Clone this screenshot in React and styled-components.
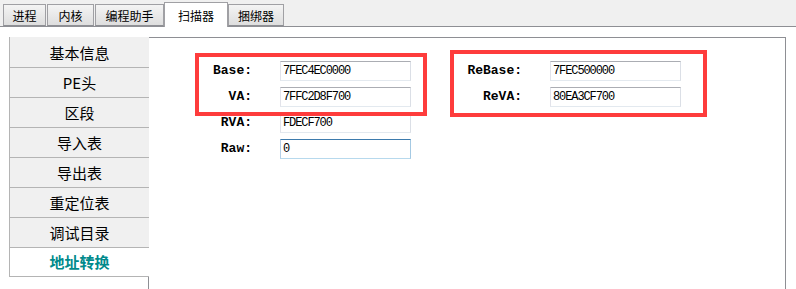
import styled, { createGlobalStyle } from 'styled-components'

const GlobalStyle = createGlobalStyle`
  html, body {
    margin: 0;
    padding: 0;
    background: #ffffff;
    font-family: "Noto Sans CJK SC", "Noto Sans", sans-serif;
    overflow: hidden;
  }
`

const tabs = [
  { label: '进程', width: 43 },
  { label: '内核', width: 47 },
  { label: '编程助手', width: 69 },
  { label: '扫描器', width: 64, active: true },
  { label: '捆绑器', width: 56 },
]

const menu = ['基本信息', 'PE头', '区段', '导入表', '导出表', '重定位表', '调试目录', '地址转换']

const leftRows = [
  { label: 'Base:', value: '7FEC4EC0000' },
  { label: 'VA:', value: '7FFC2D8F700' },
  { label: 'RVA:', value: 'FDECF700' },
  { label: 'Raw:', value: '0', focused: true },
]

const rightRows = [
  { label: 'ReBase:', value: '7FEC500000' },
  { label: 'ReVA:', value: '80EA3CF700' },
]

const App = () => {
  return (
    <>
      <GlobalStyle />
      <Page>
        <TabBar>
          {tabs.map(t => (
            <Tab key={t.label} $w={t.width} $active={t.active}>{t.label}</Tab>
          ))}
        </TabBar>
        <Body>
          <Sidebar>
            {menu.map((m, i) => (
              <MenuItem key={m} $active={i === menu.length - 1}>{m}</MenuItem>
            ))}
          </Sidebar>
          <Panel>
            <Group $labelWidth={52}>
              {leftRows.map(r => (
                <Row key={r.label}>
                  <Label>{r.label}</Label>
                  <Field readOnly value={r.value} $focused={r.focused} />
                </Row>
              ))}
            </Group>
            <Group $labelWidth={70}>
              {rightRows.map(r => (
                <Row key={r.label}>
                  <Label>{r.label}</Label>
                  <Field readOnly value={r.value} />
                </Row>
              ))}
            </Group>
            {/* red annotation frames drawn over the form */}
            <Mark $left={46} $top={15} $w={232} $h={63} />
            <Mark $left={301} $top={12} $w={257} $h={67} />
          </Panel>
        </Body>
      </Page>
    </>
  )
}

export default App

const Page = styled.div`
  width: 796px;
  height: 289px;
  overflow: hidden;
  background: #ffffff;
`

const TabBar = styled.div`
  display: flex;
  align-items: flex-end;
  gap: 1px;
  height: 26px;
  padding-left: 3px;
  background: #f0f0f0;
  border-bottom: 1px solid #8e8f94;
`

const Tab = styled.div`
  box-sizing: border-box;
  width: ${p => p.$w}px;
  height: ${p => (p.$active ? 25 : 22)}px;
  margin: ${p => (p.$active ? '0 -1px -1px -1px' : '0')};
  position: relative;
  z-index: ${p => (p.$active ? 1 : 0)};
  display: flex;
  align-items: center;
  justify-content: center;
  font-size: 12px;
  color: #000;
  border: 1px solid #a0a0a4;
  border-bottom: ${p => (p.$active ? 'none' : '1px solid #8e8f94')};
  background: ${p => (p.$active ? '#ffffff' : 'linear-gradient(#f4f4f4, #dedede)')};
  padding-top: ${p => (p.$active ? 0 : 1)}px;
`

const Body = styled.div`
  display: flex;
  align-items: flex-start;
  padding: 10px 10px 0 9px;
`

const Sidebar = styled.div`
  position: relative;
  z-index: 1;
  box-sizing: border-box;
  width: 140px;
  margin-right: -1px;
  padding-top: 1px;
  background: #f0f0f0;
  border-left: 1px solid #b4b4b4;
  display: flex;
  flex-direction: column;
`

const MenuItem = styled.div`
  box-sizing: border-box;
  height: 30px;
  padding-bottom: 1px;
  display: flex;
  align-items: center;
  justify-content: center;
  font-size: 15px;
  border-bottom: 1px solid #b4b4b4;
  background: ${p => (p.$active ? '#ffffff' : '#f0f0f0')};
  color: ${p => (p.$active ? '#008a8c' : '#000000')};
  font-weight: ${p => (p.$active ? 700 : 400)};
  &:last-child {
    height: 29px;
  }
`

const Panel = styled.div`
  position: relative;
  flex: 1;
  height: 300px;
  display: flex;
  align-items: flex-start;
  gap: 41px;
  padding: 23px 0 0 51px;
  border: 1px solid #8e8f94;
  border-bottom: none;
`

const Group = styled.div`
  display: flex;
  flex-direction: column;
  gap: 6px;
  --label-w: ${p => p.$labelWidth}px;
`

const Row = styled.div`
  display: grid;
  grid-template-columns: var(--label-w) 131px;
  column-gap: 28px;
  align-items: center;
  height: 20px;
`

const Label = styled.span`
  text-align: right;
  font-family: "Liberation Mono", monospace;
  font-weight: 700;
  font-size: 13px;
  line-height: 20px;
  color: #000;
`

const Field = styled.input`
  box-sizing: border-box;
  width: 131px;
  height: 20px;
  margin: 0;
  padding: 0 2px;
  outline: none;
  background: #fff;
  color: #000;
  font-family: "Liberation Mono", monospace;
  font-size: 12px;
  letter-spacing: -1.1px;
  border: 1px solid;
  border-color: ${p => (p.$focused ? '#3d7bad #a4c9e3 #b7d9ed #b5cfe7' : '#abadb3 #dbdfe6 #e3e9ef #e2e3ea')};
`

const Mark = styled.div`
  position: absolute;
  left: ${p => p.$left}px;
  top: ${p => p.$top}px;
  width: ${p => p.$w}px;
  height: ${p => p.$h}px;
  box-sizing: border-box;
  border: 4px solid #fe3c3c;
  pointer-events: none;
`
